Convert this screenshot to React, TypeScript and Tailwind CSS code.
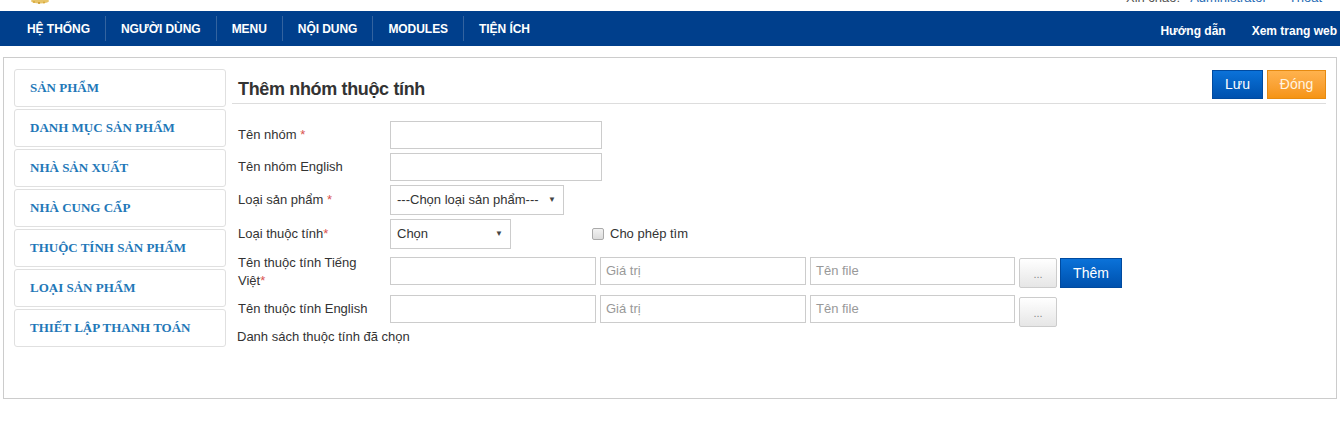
import type { ReactNode } from "react";

const menuItems = ["HỆ THỐNG", "NGƯỜI DÙNG", "MENU", "NỘI DUNG", "MODULES", "TIỆN ÍCH"];

const sideItems = [
  "SẢN PHẨM",
  "DANH MỤC SẢN PHẨM",
  "NHÀ SẢN XUẤT",
  "NHÀ CUNG CẤP",
  "THUỘC TÍNH SẢN PHẨM",
  "LOẠI SẢN PHẨM",
  "THIẾT LẬP THANH TOÁN",
];

const Req = () => <span className="text-[#d9534f]">*</span>;

const TextInput = ({ w, placeholder }: { w: string; placeholder?: string }) => (
  <div
    className={`${w} h-[28px] border border-[#cccccc] bg-white flex items-center pl-[5px] text-[13px] text-[#999999]`}
  >
    {placeholder}
  </div>
);

const FakeSelect = ({ w, value }: { w: string; value: string }) => (
  <div
    className={`${w} h-[30px] border border-[#cccccc] bg-white flex items-center justify-between pl-[6px] pr-[7px] text-[13px] text-[#333333]`}
  >
    <span>{value}</span>
    <span className="text-[8px] text-[#444444]">▼</span>
  </div>
);

const DotsButton = () => (
  <div className="w-[38px] h-[30px] border border-[#cccccc] rounded-[2px] bg-gradient-to-b from-white to-[#e6e6e6] flex items-center justify-center text-[11px] text-[#888888] pt-[3px]">
    ...
  </div>
);

const Row = ({ label, children, className = "" }: { label: ReactNode; children: ReactNode; className?: string }) => (
  <div className={`flex items-center ${className}`}>
    <div className="w-[152px] shrink-0 text-[13px] text-[#333333] leading-[18px]">{label}</div>
    {children}
  </div>
);

export default function App() {
  return (
    <div className="w-[1340px] h-[424px] bg-white font-['Liberation_Sans',Arial,sans-serif] overflow-hidden">
      {/* top strip */}
      <div className="h-[11px] overflow-hidden flex justify-between">
        <svg width="60" height="11" viewBox="0 0 60 11">
          <ellipse cx="40" cy="1" rx="9" ry="2.5" fill="#e7c46a" />
          <circle cx="34" cy="2" r="1" fill="#d9a93a" />
          <circle cx="44" cy="2.5" r="1" fill="#d9a93a" />
          <circle cx="39" cy="3" r="1" fill="#c9962a" />
        </svg>
        <div className="-mt-[10px] flex text-[13px] leading-[16px] pr-[18px]">
          <span className="text-[#555555]">Xin chào:</span>
          <span className="ml-[10px] text-[#2a6db5]">Administrator</span>
          <span className="ml-[22px] text-[#2a6db5]">Thoát</span>
        </div>
      </div>

      {/* nav bar */}
      <div className="h-[35px] bg-[#003f8c] flex items-center justify-between">
        <div className="flex items-center pl-[12px] h-full">
          {menuItems.map((m, i) => (
            <div key={m} className="flex items-center h-full">
              {i > 0 && <div className="w-px h-[25px] bg-[#33639f]" />}
              <div className="px-[15px] text-[12px] font-bold text-white tracking-[-0.05px]">{m}</div>
            </div>
          ))}
        </div>
        <div className="flex items-center gap-[26px] pr-[3px] pt-[4px] text-[12px] font-bold text-white">
          <span>Hướng dẫn</span>
          <span>Xem trang web</span>
        </div>
      </div>

      {/* panel */}
      <div className="mx-[3px] mt-[11px] h-[342px] border border-[#cccccc] flex pt-[11px] pl-[10px] pr-[10px]">
        <div className="w-[212px] shrink-0 flex flex-col gap-[2px]">
          {sideItems.map((s) => (
            <div
              key={s}
              className="h-[38px] border border-[#e0e0e0] rounded-[3px] flex items-center pl-[15px] font-['Liberation_Serif','Times_New_Roman',serif] font-bold text-[13px] text-[#1f78b8]"
            >
              {s}
            </div>
          ))}
        </div>

        <div className="flex-1 ml-[6px]">
          <div className="flex items-end justify-between border-b border-[#dddddd] pb-[4px] h-[35px]">
            <h1 className="pl-[6px] text-[18px] font-bold text-[#333333] leading-[22px] mb-[-1px] tracking-[-0.35px]">
              Thêm nhóm thuộc tính
            </h1>
            <div className="flex gap-[4px]">
              <div className="w-[51px] h-[29px] bg-gradient-to-b from-[#0b72d9] to-[#0051ae] border border-[#004a9f] flex items-center justify-center text-[14px] text-white">
                Lưu
              </div>
              <div className="w-[59px] h-[29px] bg-gradient-to-b from-[#ffb24d] to-[#f59412] border border-[#e68a10] flex items-center justify-center text-[14px] text-[#fff4e0]">
                Đóng
              </div>
            </div>
          </div>

          <div className="pl-[6px] pt-[17px] flex flex-col">
            <Row label={<>Tên nhóm <Req /></>}>
              <TextInput w="w-[212px]" />
            </Row>
            <Row label="Tên nhóm English" className="mt-[4px]">
              <TextInput w="w-[212px]" />
            </Row>
            <Row label={<>Loại sản phẩm <Req /></>} className="mt-[4px]">
              <FakeSelect w="w-[174px]" value="---Chọn loại sản phẩm---" />
            </Row>
            <Row label={<>Loại thuộc tính<Req /></>} className="mt-[4px]">
              <FakeSelect w="w-[121px]" value="Chọn" />
              <div className="ml-[81px] w-[12px] h-[12px] border border-[#aaaaaa] rounded-[2px] bg-gradient-to-b from-[#f2f2f2] to-[#dcdcdc]" />
              <span className="ml-[6px] text-[13px] text-[#333333]">Cho phép tìm</span>
            </Row>
            <div className="flex items-start mt-[5px]">
              <div className="w-[152px] shrink-0 text-[13px] text-[#333333] leading-[18px] pr-[20px]">
                Tên thuộc tính Tiếng Việt<Req />
              </div>
              <div className="flex items-start gap-[4px] mt-[3px]">
                <TextInput w="w-[206px]" />
                <TextInput w="w-[206px]" placeholder="Giá trị" />
                <TextInput w="w-[205px]" placeholder="Tên file" />
                <div className="mt-[1px]">
                  <DotsButton />
                </div>
                <div className="mt-[1px] -ml-[1px] w-[62px] h-[30px] bg-gradient-to-b from-[#0b72d9] to-[#0051ae] border border-[#004a9f] flex items-center justify-center text-[14px] text-white">
                  Thêm
                </div>
              </div>
            </div>
            <div className="flex items-start mt-[5px]">
              <div className="w-[152px] shrink-0 text-[13px] text-[#333333] leading-[28px]">Tên thuộc tính English</div>
              <div className="flex items-start gap-[4px]">
                <TextInput w="w-[206px]" />
                <TextInput w="w-[206px]" placeholder="Giá trị" />
                <TextInput w="w-[205px]" placeholder="Tên file" />
                <div className="mt-[2px]">
                  <DotsButton />
                </div>
              </div>
            </div>
            <div className="mt-[1px] -ml-[1px] text-[13px] text-[#333333] leading-[18px]">Danh sách thuộc tính đã chọn</div>
          </div>
        </div>
      </div>
    </div>
  );
}
